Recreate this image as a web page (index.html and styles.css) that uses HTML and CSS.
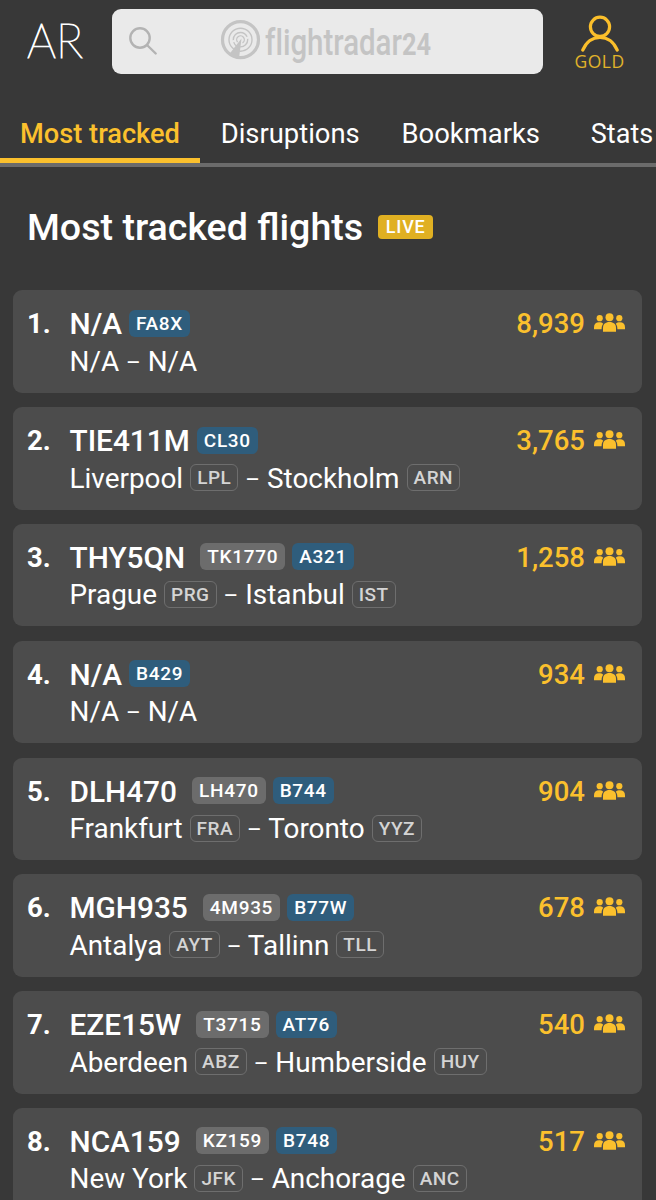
FILE: index.html
```html
<!DOCTYPE html>
<html lang="en">
<head>
    <meta charset="utf-8" />
    <title>Most tracked flights</title>
    <link rel="stylesheet" href="styles.css">
</head>
<body>
    <svg class="sprite" width="0" height="0">
        <symbol id="people" viewBox="0 0 31 20">
            <circle cx="5.7" cy="5.2" r="3.1" />
            <circle cx="25.3" cy="5.2" r="3.1" />
            <path d="M0 16.3v-2.1c0-3 2-4.9 5-4.9 1.9 0 3.2.5 4.2 1.4-1.2 1.5-1.6 3.4-1.6 5.6z" />
            <path d="M31 16.3v-2.1c0-3-2-4.9-5-4.9-1.9 0-3.2.5-4.2 1.4 1.2 1.5 1.6 3.4 1.6 5.6z" />
            <circle cx="15.5" cy="4.2" r="4" />
            <path d="M9 18.8v-4.2c0-3.4 2.5-5.6 6.5-5.6s6.5 2.2 6.5 5.6v4.2z" />
        </symbol>
    </svg>

    <header class="header">
        <a class="ar">
            <svg width="60" height="60" viewBox="0 0 60 60">
                <text x="0" y="49" textLength="56" lengthAdjust="spacingAndGlyphs">AR</text>
            </svg>
        </a>
        <div class="search">
            <svg class="search-icon" width="30" height="30" viewBox="0 0 30 30">
                <circle cx="12" cy="12" r="9.7" />
                <path d="M19 19l8.7 8.5" />
            </svg>
            <svg class="logo" width="214" height="50" viewBox="0 0 214 50">
                <g class="logo-rings">
                    <circle cx="20.5" cy="23.7" r="18" stroke-width="3.2" />
                    <circle cx="20.5" cy="23.7" r="11.5" stroke-width="1.4" />
                    <circle cx="20.5" cy="23.7" r="7.2" stroke-width="1.4" stroke-dasharray="20 2" />
                    <circle cx="20.5" cy="23.7" r="3.8" stroke-width="1.3" stroke-dasharray="18 6" transform="rotate(140 20.5 23.7)" />
                </g>
                <path d="M21.5 22.5L9 38.5l4 2.500 6 1.200z" />
                <text class="logo-text" x="45" y="38.5" textLength="166" lengthAdjust="spacingAndGlyphs">flightradar<tspan class="logo-num">24</tspan></text>
            </svg>
        </div>
        <a class="account">
            <svg width="40" height="38" viewBox="0 0 40 38">
                <circle cx="20" cy="12.8" r="9.6" />
                <path d="M2.8 36C6.5 27.5 12.5 23.5 20 23.5S33.5 27.5 37.2 36" />
            </svg>
            <span>GOLD</span>
        </a>
    </header>

    <nav class="tabs">
        <a class="tab active">Most tracked</a>
        <a class="tab">Disruptions</a>
        <a class="tab">Bookmarks</a>
        <a class="tab last">Stats</a>
    </nav>

    <div class="heading">
        <h1>Most tracked flights</h1>
        <span class="live">LIVE</span>
    </div>

    <div class="list">
        <div class="card">
            <div class="rank">1.</div>
            <div class="info">
                <div class="line flight"><b>N/A</b><span class="tag type">FA8X</span></div>
                <div class="line route">N/A <i>–</i> N/A</div>
            </div>
            <div class="count">8,939<svg><use href="#people" /></svg></div>
        </div>
        <div class="card">
            <div class="rank">2.</div>
            <div class="info">
                <div class="line flight"><b>TIE411M</b><span class="tag type">CL30</span></div>
                <div class="line route">Liverpool<span class="tag code">LPL</span><i>–</i> Stockholm<span class="tag code">ARN</span></div>
            </div>
            <div class="count">3,765<svg><use href="#people" /></svg></div>
        </div>
        <div class="card">
            <div class="rank">3.</div>
            <div class="info">
                <div class="line flight"><b>THY5QN</b><span class="tag number">TK1770</span><span class="tag type">A321</span></div>
                <div class="line route">Prague<span class="tag code">PRG</span><i>–</i> Istanbul<span class="tag code">IST</span></div>
            </div>
            <div class="count">1,258<svg><use href="#people" /></svg></div>
        </div>
        <div class="card">
            <div class="rank">4.</div>
            <div class="info">
                <div class="line flight"><b>N/A</b><span class="tag type">B429</span></div>
                <div class="line route">N/A <i>–</i> N/A</div>
            </div>
            <div class="count">934<svg><use href="#people" /></svg></div>
        </div>
        <div class="card">
            <div class="rank">5.</div>
            <div class="info">
                <div class="line flight"><b>DLH470</b><span class="tag number">LH470</span><span class="tag type">B744</span></div>
                <div class="line route">Frankfurt<span class="tag code">FRA</span><i>–</i> Toronto<span class="tag code">YYZ</span></div>
            </div>
            <div class="count">904<svg><use href="#people" /></svg></div>
        </div>
        <div class="card">
            <div class="rank">6.</div>
            <div class="info">
                <div class="line flight"><b>MGH935</b><span class="tag number">4M935</span><span class="tag type">B77W</span></div>
                <div class="line route">Antalya<span class="tag code">AYT</span><i>–</i> Tallinn<span class="tag code">TLL</span></div>
            </div>
            <div class="count">678<svg><use href="#people" /></svg></div>
        </div>
        <div class="card">
            <div class="rank">7.</div>
            <div class="info">
                <div class="line flight"><b>EZE15W</b><span class="tag number">T3715</span><span class="tag type">AT76</span></div>
                <div class="line route">Aberdeen<span class="tag code">ABZ</span><i>–</i> Humberside<span class="tag code">HUY</span></div>
            </div>
            <div class="count">540<svg><use href="#people" /></svg></div>
        </div>
        <div class="card">
            <div class="rank">8.</div>
            <div class="info">
                <div class="line flight"><b>NCA159</b><span class="tag number">KZ159</span><span class="tag type">B748</span></div>
                <div class="line route">New York<span class="tag code">JFK</span><i>–</i> Anchorage<span class="tag code">ANC</span></div>
            </div>
            <div class="count">517<svg><use href="#people" /></svg></div>
        </div>
    </div>
</body>
</html>
```
FILE: styles.css
```css
* {
    box-sizing: border-box;
}

body {
    margin: 0;
    height: 1200px;
    overflow: hidden;
    background: #383838;
    color: #fff;
    font-family: Roboto, "Liberation Sans", sans-serif;
}

.sprite {
    display: block;
}

/* header */
.header {
    display: flex;
    height: 90px;
    padding: 9px 0 0 27px;
}

.ar {
    width: 85px;
    height: 65px;
}

.ar text {
    fill: #fff;
    stroke: #fff;
    stroke-width: 1.1px;
    font: 100 47px Lato, sans-serif;
}

.search {
    display: flex;
    width: 431px;
    height: 65px;
    padding: 7px 0 0 16px;
    background: #eaeaea;
    border-radius: 9px;
}

.search-icon {
    margin: 10px 62px 0 0;
    fill: none;
    stroke: #b3b3b3;
    stroke-width: 2.4;
    stroke-linecap: round;
}

.logo {
    fill: #c4c4c4;
}

.logo-rings {
    fill: none;
    stroke: #c4c4c4;
}

.logo-text {
    font-family: Roboto, sans-serif;
    font-size: 36px;
    font-weight: 500;
    font-variant-ligatures: none;
}

.logo-num {
    font-size: 31px;
    font-weight: 700;
}

.account {
    display: flex;
    flex-direction: column;
    align-items: center;
    width: 113px;
    padding-top: 5px;
    color: #e0b32a;
    font: 17.5px/19px "Open Sans", sans-serif;
    letter-spacing: 0.5px;
}

.account svg {
    fill: none;
    stroke: #fbbf2b;
    stroke-width: 3.2;
    stroke-linecap: round;
}

/* tabs */
.tabs {
    display: flex;
    height: 77px;
    border-bottom: 4px solid #6b6b6b;
    overflow: hidden;
}

.tab {
    flex: none;
    width: 180.5px;
    font-size: 27.4px;
    line-height: 88px;
    text-align: center;
    white-space: nowrap;
}

.tab.active {
    width: 200px;
    border-bottom: 5px solid #fbc02d;
    color: #fbc02d;
    font-size: 27.2px;
    font-weight: 500;
}

.tab.last {
    width: 95px;
    padding-left: 27px;
    font-size: 27px;
}

/* title */
.heading {
    display: flex;
    align-items: center;
    height: 123px;
    padding: 0 0 3px 27px;
}

h1 {
    margin: 0 15px 0 0;
    font-size: 37.6px;
    font-weight: 500;
}

.live {
    width: 55px;
    height: 24px;
    border-radius: 4px;
    background: #e0b022;
    font-size: 18px;
    font-weight: 500;
    line-height: 24px;
    letter-spacing: 0.8px;
    text-align: center;
}

/* flights */
.list {
    display: grid;
    gap: 14.3px;
    padding: 0.4px 14px 0 13px;
}

.card {
    display: flex;
    height: 102.5px;
    padding: 15px 17px 0 14px;
    border-radius: 9px;
    background: #4c4c4c;
    line-height: 38px;
}

.rank {
    width: 42.5px;
    font-size: 27.5px;
    font-weight: 700;
}

.info {
    flex: 1;
}

.line {
    display: flex;
    height: 37.5px;
    white-space: pre;
}

.flight b {
    font-size: 29.8px;
    font-weight: 500;
}

.route {
    font-size: 27.9px;
}

.route i {
    font-size: 22.5px;
    font-style: normal;
}

.tag {
    height: 27px;
    margin: 4.500px 0 0 7px;
    padding: 0 7px;
    border-radius: 6px;
    font-size: 19px;
    font-weight: 500;
    line-height: 27px;
    letter-spacing: 0.7px;
}

.type {
    background: #2f5d7c;
}

.number {
    margin-left: 15px;
    background: #6c6c6c;
}

.code {
    margin-right: 7px;
    padding: 0 6px;
    border: 1.5px solid #6e6e6e;
    color: #d4d4d4;
    line-height: 25px;
    letter-spacing: 0.5px;
}

.count {
    display: flex;
    color: #fbc02d;
    font-size: 27.5px;
    font-weight: 500;
}

.count svg {
    width: 31px;
    height: 20px;
    margin: 8px 0 0 9px;
    fill: #fbc02d;
}
```
